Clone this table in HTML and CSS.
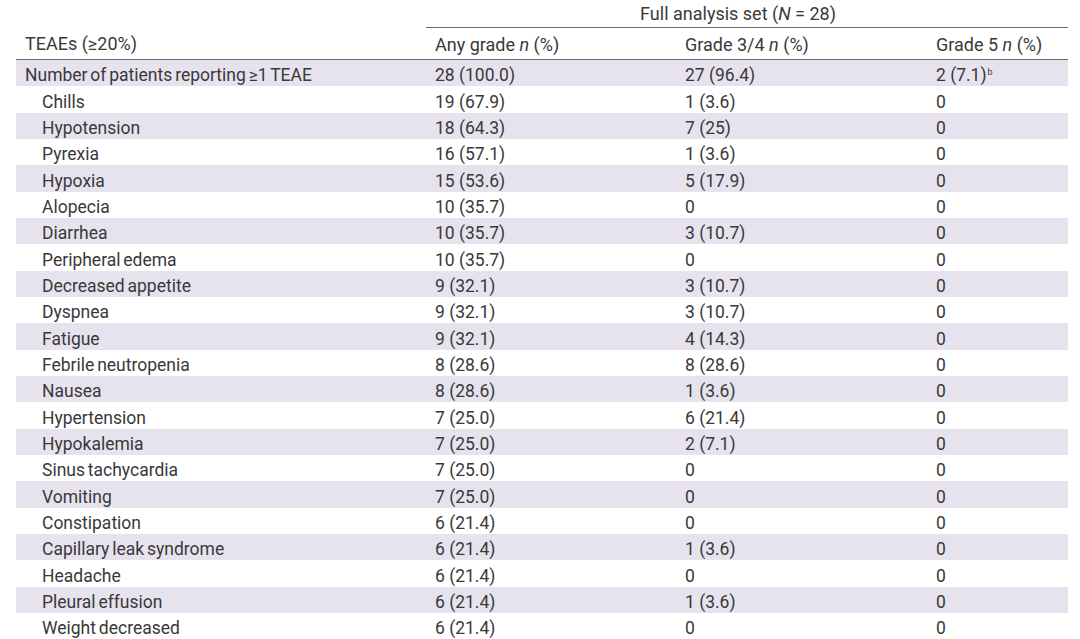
FILE: index.html
```html
<!DOCTYPE html>
<html lang="en">
<head>
<meta charset="utf-8">
<link rel="stylesheet" href="styles.css">
</head>
<body>
<table class="ae-table">
  <colgroup>
    <col class="c1"><col class="c2"><col class="c3"><col class="c4">
  </colgroup>
  <thead>
    <tr class="h-top">
      <th></th>
      <th colspan="3" class="span">Full analysis set (<i>N</i> = 28)</th>
    </tr>
    <tr class="h-main">
      <th>TEAEs (≥20%)</th>
      <th>Any grade <i>n</i> (%)</th>
      <th>Grade 3/4 <i>n</i> (%)</th>
      <th>Grade 5 <i>n</i> (%)</th>
    </tr>
  </thead>
  <tbody>
    <tr><td class="lbl">Number of patients reporting ≥1 TEAE</td><td>28 (100.0)</td><td>27 (96.4)</td><td>2 (7.1)<sup>b</sup></td></tr>
    <tr><td class="lbl sub">Chills</td><td>19 (67.9)</td><td>1 (3.6)</td><td>0</td></tr>
    <tr><td class="lbl sub">Hypotension</td><td>18 (64.3)</td><td>7 (25)</td><td>0</td></tr>
    <tr><td class="lbl sub">Pyrexia</td><td>16 (57.1)</td><td>1 (3.6)</td><td>0</td></tr>
    <tr><td class="lbl sub">Hypoxia</td><td>15 (53.6)</td><td>5 (17.9)</td><td>0</td></tr>
    <tr><td class="lbl sub">Alopecia</td><td>10 (35.7)</td><td>0</td><td>0</td></tr>
    <tr><td class="lbl sub">Diarrhea</td><td>10 (35.7)</td><td>3 (10.7)</td><td>0</td></tr>
    <tr><td class="lbl sub">Peripheral edema</td><td>10 (35.7)</td><td>0</td><td>0</td></tr>
    <tr><td class="lbl sub">Decreased appetite</td><td>9 (32.1)</td><td>3 (10.7)</td><td>0</td></tr>
    <tr><td class="lbl sub">Dyspnea</td><td>9 (32.1)</td><td>3 (10.7)</td><td>0</td></tr>
    <tr><td class="lbl sub">Fatigue</td><td>9 (32.1)</td><td>4 (14.3)</td><td>0</td></tr>
    <tr><td class="lbl sub">Febrile neutropenia</td><td>8 (28.6)</td><td>8 (28.6)</td><td>0</td></tr>
    <tr><td class="lbl sub">Nausea</td><td>8 (28.6)</td><td>1 (3.6)</td><td>0</td></tr>
    <tr><td class="lbl sub">Hypertension</td><td>7 (25.0)</td><td>6 (21.4)</td><td>0</td></tr>
    <tr><td class="lbl sub">Hypokalemia</td><td>7 (25.0)</td><td>2 (7.1)</td><td>0</td></tr>
    <tr><td class="lbl sub">Sinus tachycardia</td><td>7 (25.0)</td><td>0</td><td>0</td></tr>
    <tr><td class="lbl sub">Vomiting</td><td>7 (25.0)</td><td>0</td><td>0</td></tr>
    <tr><td class="lbl sub">Constipation</td><td>6 (21.4)</td><td>0</td><td>0</td></tr>
    <tr><td class="lbl sub">Capillary leak syndrome</td><td>6 (21.4)</td><td>1 (3.6)</td><td>0</td></tr>
    <tr><td class="lbl sub">Headache</td><td>6 (21.4)</td><td>0</td><td>0</td></tr>
    <tr><td class="lbl sub">Pleural effusion</td><td>6 (21.4)</td><td>1 (3.6)</td><td>0</td></tr>
    <tr><td class="lbl sub">Weight decreased</td><td>6 (21.4)</td><td>0</td><td>0</td></tr>
  </tbody>
</table>
</body>
</html>
```

FILE: styles.css
```css
html, body {
  margin: 0;
  padding: 0;
  background: #ffffff;
}
body {
  padding-left: 16px;
  font-family: Roboto, "Noto Sans", sans-serif;
  color: #393939;
  font-size: 17.5px;
  overflow: hidden;
}
.ae-table {
  width: 1052px;
  border-collapse: collapse;
  table-layout: fixed;
  font-size: 17.5px;
}
.c1 { width: 410px; }
.c2 { width: 250px; }
.c3 { width: 251px; }
.c4 { width: 141px; }
.ae-table th {
  font-weight: 400;
  text-align: left;
  padding: 0 0 0 9px;
  white-space: nowrap;
  font-size: 18px;
}
.h-top th {
  height: 27px;
  vertical-align: middle;
}
.h-top th.span {
  text-align: center;
  padding-left: 0;
  padding-right: 18px;
  border-bottom: 1px solid #6a6a6a;
}
.h-main th {
  height: 30px;
  border-bottom: 1px solid #6a6a6a;
  vertical-align: middle;
  padding-top: 1px;
}
.ae-table td {
  height: 20.33px;
  padding: 6px 0 0 9px;
  white-space: nowrap;
  vertical-align: middle;
  line-height: 1;
}
.ae-table td.lbl {
  word-spacing: -1.5px;
}
.ae-table td.sub {
  padding-left: 26px;
}
.ae-table tbody tr:nth-child(odd) td {
  background: #e7e3ee;
}
sup {
  font-size: 9px;
  vertical-align: 6px;
  line-height: 0;
  margin-left: 1px;
}
i {
  font-style: italic;
}
```
